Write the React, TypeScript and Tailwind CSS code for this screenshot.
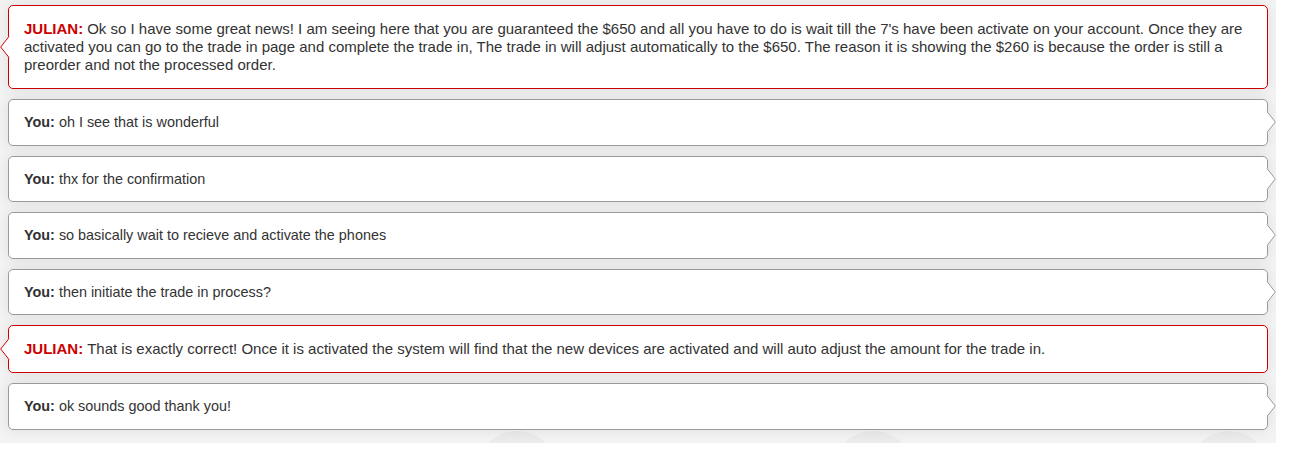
import React from 'react';

type Msg = { from: 'agent' | 'you'; text: string };

const messages: Msg[] = [
  {
    from: 'agent',
    text: "Ok so I have some great news! I am seeing here that you are guaranteed the $650 and all you have to do is wait till the 7's have been activate on your account. Once they are activated you can go to the trade in page and complete the trade in, The trade in will adjust automatically to the $650. The reason it is showing the $260 is because the order is still a preorder and not the processed order.",
  },
  { from: 'you', text: 'oh I see that is wonderful' },
  { from: 'you', text: 'thx for the confirmation' },
  { from: 'you', text: 'so basically wait to recieve and activate the phones' },
  { from: 'you', text: 'then initiate the trade in process?' },
  {
    from: 'agent',
    text: 'That is exactly correct! Once it is activated the system will find that the new devices are activated and will auto adjust the amount for the trade in.',
  },
  { from: 'you', text: 'ok sounds good thank you!' },
];

// little arrow sticking out of the bubble edge
const Tail: React.FC<{ side: 'left' | 'right'; color: string }> = ({ side, color }) => (
  <svg
    width="10"
    height="22"
    viewBox="0 0 10 22"
    className={`absolute top-1/2 -translate-y-1/2 ${side === 'left' ? 'left-[-9px]' : 'right-[-9px] rotate-180'}`}
  >
    <polygon points="10,0 9,0 0.7,11 9,22 10,22" fill="#fff" />
    <polyline points="9,0.5 0.7,11 9,21.5" fill="none" stroke={color} strokeWidth="1" />
  </svg>
);

const Bubble: React.FC<{ msg: Msg }> = ({ msg }) => {
  const agent = msg.from === 'agent';
  return (
    <div
      className={`relative bg-white rounded-[5px] border shadow-[0_0_14px_rgba(0,0,0,0.09)] px-[15px] py-[14px] ${
        agent ? 'border-[#cc0000] text-[15px] leading-[18px]' : 'border-[#9a9a9a] text-[14.4px] leading-[16.5px]'
      }`}
    >
      <p className="text-[#333]">
        {agent ? (
          <span className="font-bold text-[#cc0000] mr-[4px]">JULIAN:</span>
        ) : (
          <span className="font-bold text-[#333] mr-[4px]">You:</span>
        )}
        {msg.text}
      </p>
      <Tail side={agent ? 'left' : 'right'} color={agent ? '#cc0000' : '#9a9a9a'} />
    </div>
  );
};

export default function App() {
  return (
    <div className="bg-white min-h-[473px]" style={{ fontFamily: '"Liberation Sans", Arial, sans-serif' }}>
      <div className="w-[1276px] overflow-hidden bg-[#f3f3f3] px-[8px] pt-[5px]">
        <div className="flex flex-col gap-[10px]">
          {messages.map((m, i) => (
            <Bubble key={i} msg={m} />
          ))}
        </div>
        {/* faint background shapes peeking out at the bottom */}
        <div className="flex h-[13px] overflow-hidden pl-[469px] gap-[276px]">
          <div className="mt-[1px] w-[80px] h-[80px] shrink-0 rounded-full bg-[#ebebeb]"></div>
          <div className="mt-[1px] w-[80px] h-[80px] shrink-0 rounded-full bg-[#ebebeb]"></div>
          <div className="mt-[1px] w-[80px] h-[80px] shrink-0 rounded-full bg-[#ebebeb]"></div>
        </div>
      </div>
    </div>
  );
}
